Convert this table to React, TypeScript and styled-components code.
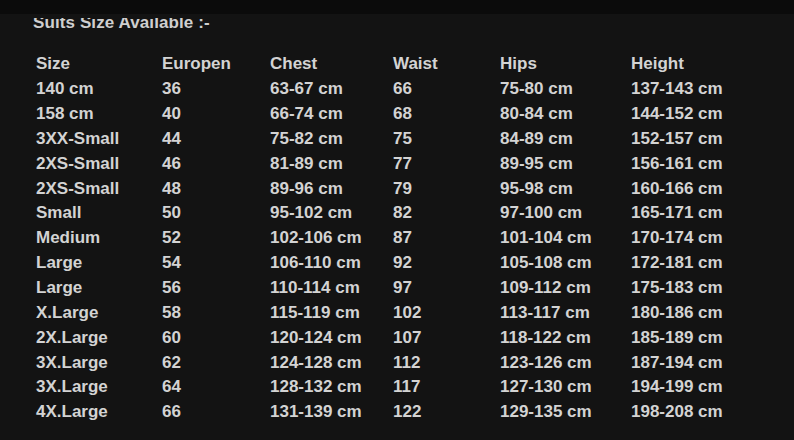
import styled, { createGlobalStyle } from "styled-components";

const Global = createGlobalStyle`
  html, body {
    margin: 0;
    padding: 0;
    background: #131313;
  }
`;

const header = ["Size", "Europen", "Chest", "Waist", "Hips", "Height"];

const rows: string[][] = [
  ["140 cm", "36", "63-67 cm", "66", "75-80 cm", "137-143 cm"],
  ["158 cm", "40", "66-74 cm", "68", "80-84 cm", "144-152 cm"],
  ["3XX-Small", "44", "75-82 cm", "75", "84-89 cm", "152-157 cm"],
  ["2XS-Small", "46", "81-89 cm", "77", "89-95 cm", "156-161 cm"],
  ["2XS-Small", "48", "89-96 cm", "79", "95-98 cm", "160-166 cm"],
  ["Small", "50", "95-102 cm", "82", "97-100 cm", "165-171 cm"],
  ["Medium", "52", "102-106 cm", "87", "101-104 cm", "170-174 cm"],
  ["Large", "54", "106-110 cm", "92", "105-108 cm", "172-181 cm"],
  ["Large", "56", "110-114 cm", "97", "109-112 cm", "175-183 cm"],
  ["X.Large", "58", "115-119 cm", "102", "113-117 cm", "180-186 cm"],
  ["2X.Large", "60", "120-124 cm", "107", "118-122 cm", "185-189 cm"],
  ["3X.Large", "62", "124-128 cm", "112", "123-126 cm", "187-194 cm"],
  ["3X.Large", "64", "128-132 cm", "117", "127-130 cm", "194-199 cm"],
  ["4X.Large", "66", "131-139 cm", "122", "129-135 cm", "198-208 cm"],
];

export default function App() {
  return (
    <Page>
      <Global />
      <TopBand />
      <TitleBox>
        <Title>Suits Size Available :-</Title>
      </TitleBox>
      <Table>
        {[header, ...rows].map((r, i) => (
          <Row key={i}>
            {r.map((c, j) => (
              <Cell key={j}>{c}</Cell>
            ))}
          </Row>
        ))}
      </Table>
    </Page>
  );
}

const Page = styled.div`
  width: 794px;
  height: 440px;
  overflow: hidden;
  background: #131313;
  font-family: "Liberation Sans", Arial, sans-serif;
  font-weight: bold;
  color: #d3d3d3;
`;

const TopBand = styled.div`
  height: 14px;
  background: #0b0b0b;
`;

/* the title's upper edge is cut off in the original */
const TitleBox = styled.div`
  height: 20px;
  margin-top: 4px;
  overflow: hidden;
  padding-left: 33px;
`;

const Title = styled.div`
  font-size: 17px;
  line-height: 17px;
  margin-top: -4px;
  color: #cfcfcf;
  letter-spacing: 0.1px;
`;

const Table = styled.div`
  padding: 14px 0 0 36px;
`;

const Row = styled.div`
  display: grid;
  grid-template-columns: 126px 108px 123px 107px 131px 1fr;
  height: 24.85px;
  align-items: center;
  font-size: 17px;
`;

const Cell = styled.div`
  white-space: nowrap;
`;
